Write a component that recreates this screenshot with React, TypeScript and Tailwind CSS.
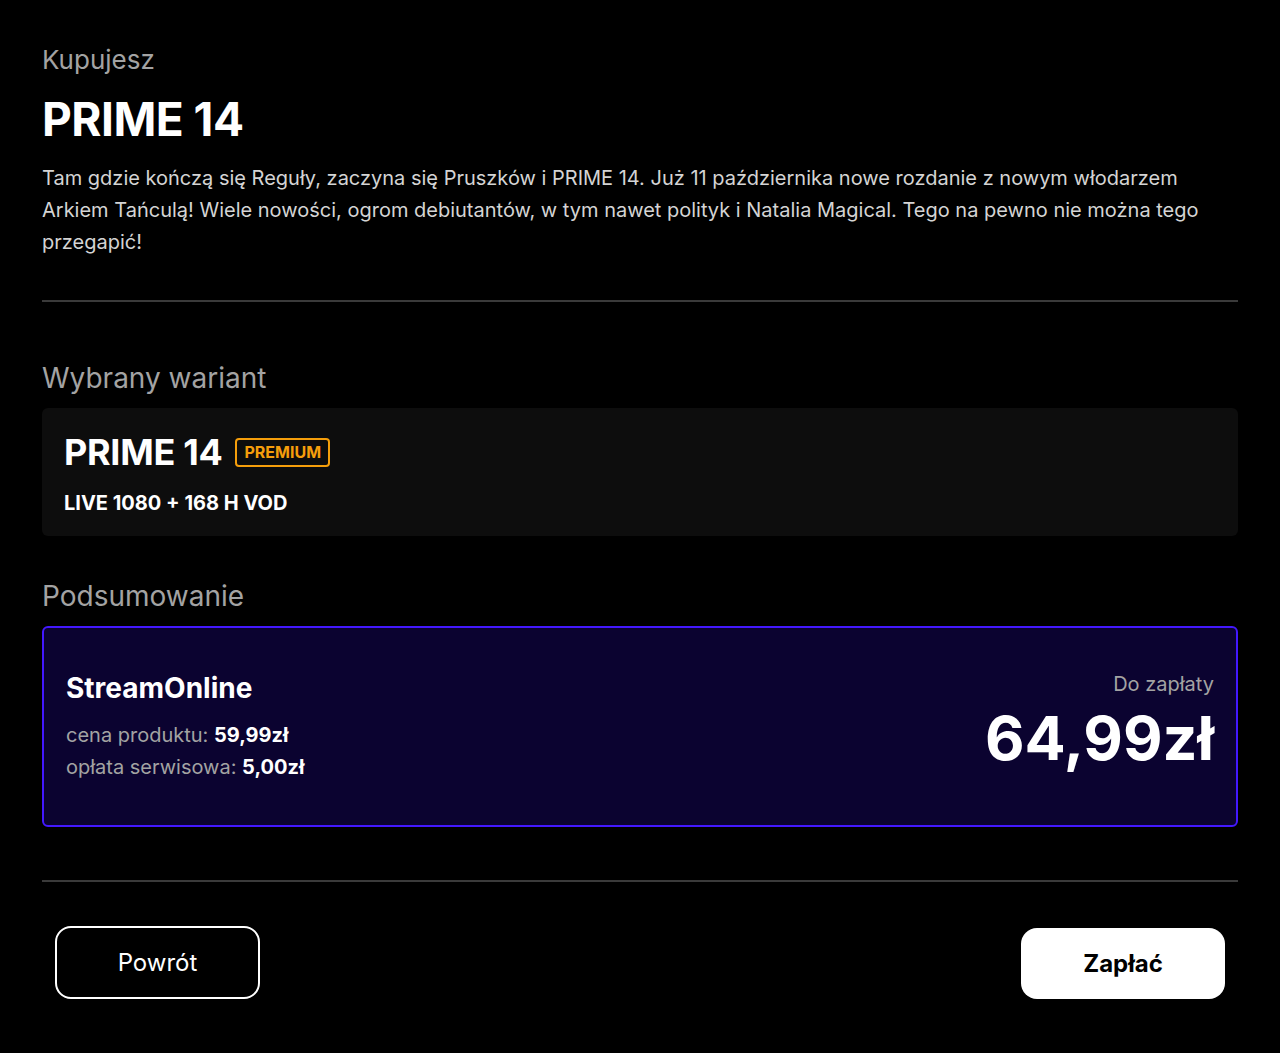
export default function App() {
  return (
    <div className="min-h-screen bg-black px-[42px] pt-[44px] pb-[55px] text-white" style={{ fontFamily: "Inter, 'Noto Sans', sans-serif" }}>
      <p className="text-[26px] leading-[32px] text-[#a3a3a3]">Kupujesz</p>
      <h1 className="mt-[17px] text-[46px] font-bold leading-[52px] tracking-[-0.5px]">PRIME 14</h1>
      <p className="mt-[17px] text-[20px] leading-[32px] text-[#d4d4d4]">
        Tam gdzie kończą się Reguły, zaczyna się Pruszków i PRIME 14. Już 11 października nowe rozdanie z nowym włodarzem
        Arkiem Tańculą! Wiele nowości, ogrom debiutantów, w tym nawet polityk i Natalia Magical. Tego na pewno nie można tego
        przegapić!
      </p>

      <div className="mt-[42px] h-[2px] bg-[#3a3a3a]" />

      <h2 className="mt-[58px] text-[28px] leading-[36px] text-[#a3a3a3]">Wybrany wariant</h2>
      <div className="mt-[12px] rounded-md bg-[#0d0d0d] px-[22px] pt-[23px] pb-[20px]">
        <div className="flex items-center gap-[13px]">
          <span className="text-[36px] font-bold leading-[42px] tracking-[-0.3px]">PRIME 14</span>
          <span className="flex h-[29px] items-center rounded border-2 border-[#f59e0b] px-[7px] text-[16px] font-bold leading-[21px] text-[#f59e0b]">PREMIUM</span>
        </div>
        <p className="mt-[17px] text-[20px] font-bold leading-[26px]">LIVE 1080 + 168 H VOD</p>
      </div>

      <h2 className="mt-[42px] text-[28px] leading-[36px] text-[#a3a3a3]">Podsumowanie</h2>
      <div className="mt-[12px] flex items-start justify-between rounded-md border-2 border-[#4318ff] bg-[#0b0330] px-[22px] py-[42px]">
        <div>
          <p className="text-[28px] font-bold leading-[36px]">StreamOnline</p>
          <p className="mt-[13px] text-[20px] leading-[32px] text-[#a3a3a3]">
            cena produktu: <span className="font-bold text-white">59,99zł</span>
          </p>
          <p className="text-[20px] leading-[32px] text-[#a3a3a3]">
            opłata serwisowa: <span className="font-bold text-white">5,00zł</span>
          </p>
        </div>
        <div className="flex flex-col items-end">
          <p className="text-[20px] leading-[28px] text-[#a3a3a3]">Do zapłaty</p>
          <p className="mt-[5px] text-[61px] font-bold leading-[70px]">64,99zł</p>
        </div>
      </div>

      <div className="mt-[53px] h-[2px] bg-[#3a3a3a]" />

      <div className="mt-[44px] flex items-end justify-between px-[13px]">
        <button className="h-[73px] w-[205px] rounded-2xl border-2 border-white text-[24px] text-white">Powrót</button>
        <button className="h-[71px] w-[204px] rounded-2xl bg-white text-[24px] font-bold text-black">Zapłać</button>
      </div>
    </div>
  );
}
